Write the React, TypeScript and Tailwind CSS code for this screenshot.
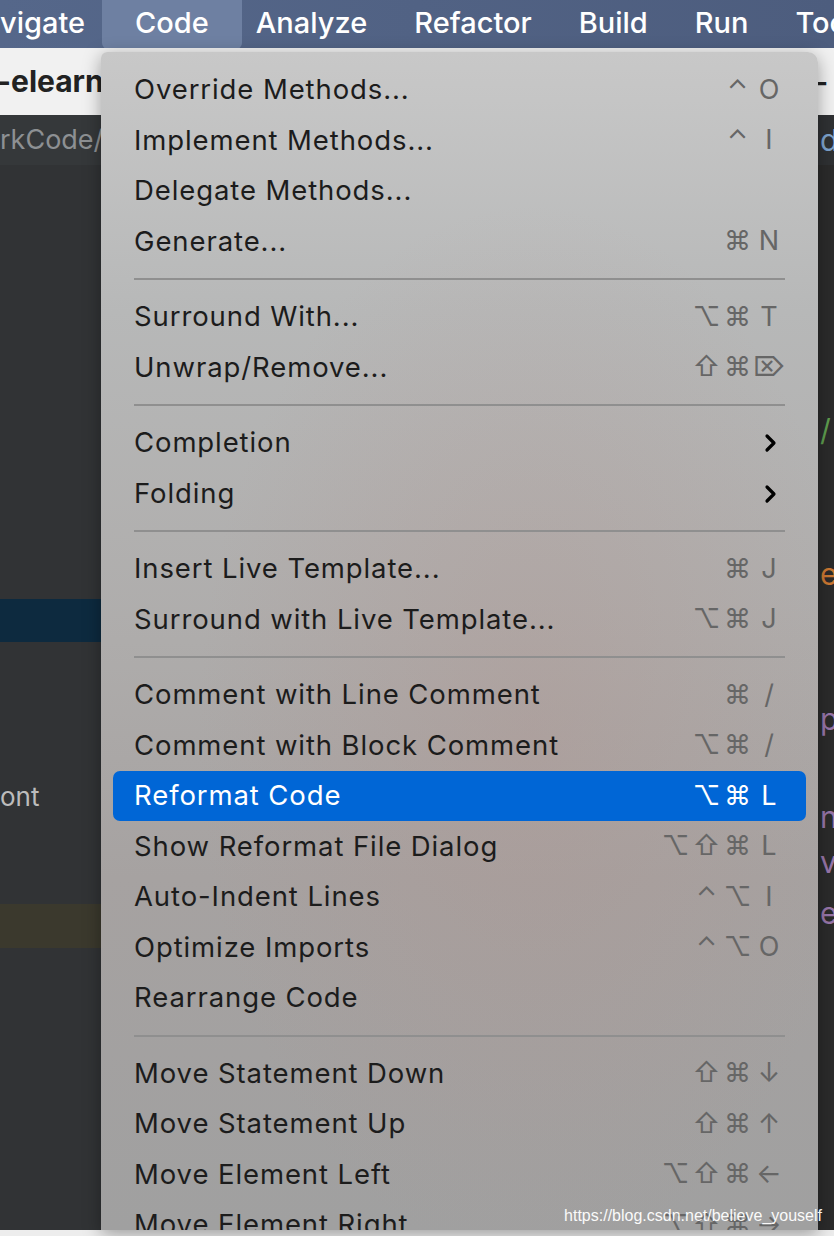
import { ReactNode } from "react";

type Item =
  | { kind: "item"; label: string; keys?: string[]; sub?: boolean; active?: boolean }
  | { kind: "sep" };

const items: Item[] = [
  { kind: "item", label: "Override Methods...", keys: ["⌃", "O"] },
  { kind: "item", label: "Implement Methods...", keys: ["⌃", "I"] },
  { kind: "item", label: "Delegate Methods..." },
  { kind: "item", label: "Generate...", keys: ["⌘", "N"] },
  { kind: "sep" },
  { kind: "item", label: "Surround With...", keys: ["⌥", "⌘", "T"] },
  { kind: "item", label: "Unwrap/Remove...", keys: ["⇧", "⌘", "⌦"] },
  { kind: "sep" },
  { kind: "item", label: "Completion", sub: true },
  { kind: "item", label: "Folding", sub: true },
  { kind: "sep" },
  { kind: "item", label: "Insert Live Template...", keys: ["⌘", "J"] },
  { kind: "item", label: "Surround with Live Template...", keys: ["⌥", "⌘", "J"] },
  { kind: "sep" },
  { kind: "item", label: "Comment with Line Comment", keys: ["⌘", "/"] },
  { kind: "item", label: "Comment with Block Comment", keys: ["⌥", "⌘", "/"] },
  { kind: "item", label: "Reformat Code", keys: ["⌥", "⌘", "L"], active: true },
  { kind: "item", label: "Show Reformat File Dialog", keys: ["⌥", "⇧", "⌘", "L"] },
  { kind: "item", label: "Auto-Indent Lines", keys: ["⌃", "⌥", "I"] },
  { kind: "item", label: "Optimize Imports", keys: ["⌃", "⌥", "O"] },
  { kind: "item", label: "Rearrange Code" },
  { kind: "sep" },
  { kind: "item", label: "Move Statement Down", keys: ["⇧", "⌘", "↓"] },
  { kind: "item", label: "Move Statement Up", keys: ["⇧", "⌘", "↑"] },
  { kind: "item", label: "Move Element Left", keys: ["⌥", "⇧", "⌘", "←"] },
  { kind: "item", label: "Move Element Right", keys: ["⌥", "⇧", "⌘", "→"] },
];

const menubar = ["vigate", "Code", "Analyze", "Refactor", "Build", "Run", "Tools"];

function Shortcut({ keys, active }: { keys: string[]; active?: boolean }) {
  const mods = keys.slice(0, -1);
  const key = keys[keys.length - 1];
  return (
    <div
      className={`flex items-center text-[27px] font-['Inter','DejaVu_Sans',sans-serif] ${
        active ? "text-white" : "text-[#666666]"
      }`}
    >
      {mods.map((m, i) => (
        <span key={i} className="w-[31px] text-center">
          {m}
        </span>
      ))}
      <span className="w-[32px] text-center">{key}</span>
    </div>
  );
}

function Chevron() {
  return (
    <svg width="32" height="24" viewBox="0 0 32 24" className="text-black">
      <path d="M14 5 L21 12 L14 19" fill="none" stroke="currentColor" strokeWidth="3.2" strokeLinecap="round" strokeLinejoin="round" />
    </svg>
  );
}

function MenuRow({ item }: { item: Extract<Item, { kind: "item" }> }) {
  return (
    <div
      className={`mx-[12px] h-[50.5px] px-[21px] flex items-center justify-between rounded-[7px] ${
        item.active ? "bg-[#0066d6] text-white" : "text-[#1c1c1c]"
      }`}
    >
      <span className="text-[27.5px] tracking-[0.9px] whitespace-nowrap">{item.label}</span>
      {item.keys && <Shortcut keys={item.keys} active={item.active} />}
      {item.sub && <Chevron />}
    </div>
  );
}

function CodeLine({ top, color, children }: { top: string; color: string; children: ReactNode }) {
  return <div className={`${top} ${color} text-[30px] leading-[36px] pl-[2px]`}>{children}</div>;
}

export default function App() {
  return (
    <div className="relative w-[834px] h-[1236px] overflow-hidden bg-[#2b2b2b] font-['Inter','Noto_Sans',sans-serif] flex flex-col">
      {/* macOS menu bar */}
      <div className="h-[48px] shrink-0 flex items-center bg-[linear-gradient(90deg,#55678a,#4d5d7e)] text-white text-[29px] font-medium overflow-hidden">
        <div className="flex items-center gap-[47px] whitespace-nowrap -mt-[2px]">
          {menubar.map((m) =>
            m === "Code" ? (
              <div key={m} className="-ml-[30px] -mr-[33px] px-[33px] h-[50px] mt-[2px] pb-[2px] flex items-center bg-[#6e80a2] rounded-b-[6px]">
                {m}
              </div>
            ) : (
              <span key={m}>{m}</span>
            )
          )}
        </div>
      </div>

      {/* toolbar */}
      <div className="h-[67px] shrink-0 bg-[#f1f1f1] flex items-center justify-between">
        <span className="text-[30px] font-bold text-[#222222] -ml-[3px]">-elearn</span>
        <span className="text-[28px] font-bold text-[#222222] mr-[6px]">-</span>
      </div>

      {/* IDE body */}
      <div className="flex-1 flex">
        <div className="w-[101px] bg-[#313335] flex flex-col">
          <div className="h-[50px] bg-[#35383a] flex items-center text-[27px] text-[#8d9093] whitespace-nowrap">
            rkCode/
          </div>
          <div className="h-[434px]" />
          <div className="h-[43px] bg-[#0d2a3f]" />
          <div className="h-[129px]" />
          <div className="h-[50px] flex items-center text-[26px] text-[#bcbcbc]">ont</div>
          <div className="h-[83px]" />
          <div className="h-[44px] bg-[#3b392d]" />
        </div>
        <div className="flex-1" />
        <div className="w-[16px] bg-[#2b2b2b] overflow-hidden whitespace-nowrap flex flex-col">
          <div className="h-[50px] bg-[#2f3133]">
            <div className="text-[30px] leading-[50px] text-[#7ea4cf] pl-[2px]">d</div>
          </div>
          <CodeLine top="mt-[247px]" color="text-[#5f9e4f]">/</CodeLine>
          <CodeLine top="mt-[108px]" color="text-[#cc7832]">e</CodeLine>
          <CodeLine top="mt-[109px]" color="text-[#9876aa]">p</CodeLine>
          <CodeLine top="mt-[62px]" color="text-[#9876aa]">n</CodeLine>
          <CodeLine top="mt-[9px]" color="text-[#9876aa]">v</CodeLine>
          <CodeLine top="mt-[15px]" color="text-[#9876aa]">e</CodeLine>
        </div>
      </div>
      <div className="h-[6px] shrink-0 bg-[#ededed]" />

      {/* Code dropdown menu */}
      <div className="absolute left-[101px] top-[52px] w-[717px] h-[1178px] overflow-hidden rounded-tr-[10px] rounded-tl-[6px] shadow-[0_4px_18px_rgba(0,0,0,0.35)] bg-[linear-gradient(180deg,#c8c8c8_0%,#b7b8b8_22%,#aeacab_50%,#a6a2a1_70%,#a0a0a0_100%)]">
        <div className="absolute inset-0 bg-[radial-gradient(ellipse_at_60%_58%,rgba(176,146,140,0.35),transparent_55%)]" />
        <div className="relative pt-[12.75px] flex flex-col">
          {items.map((it, i) =>
            it.kind === "sep" ? (
              <div key={i} className="h-[25px] flex items-center mx-[33px]">
                <div className="h-[2px] w-full bg-[#8f8f8f]" />
              </div>
            ) : (
              <MenuRow key={i} item={it} />
            )
          )}
        </div>
      </div>

      <div className="absolute right-[12px] bottom-[8px] text-[16px] text-white font-['Liberation_Sans',sans-serif] opacity-95">
        https://blog.csdn.net/believe_youself
      </div>
    </div>
  );
}
